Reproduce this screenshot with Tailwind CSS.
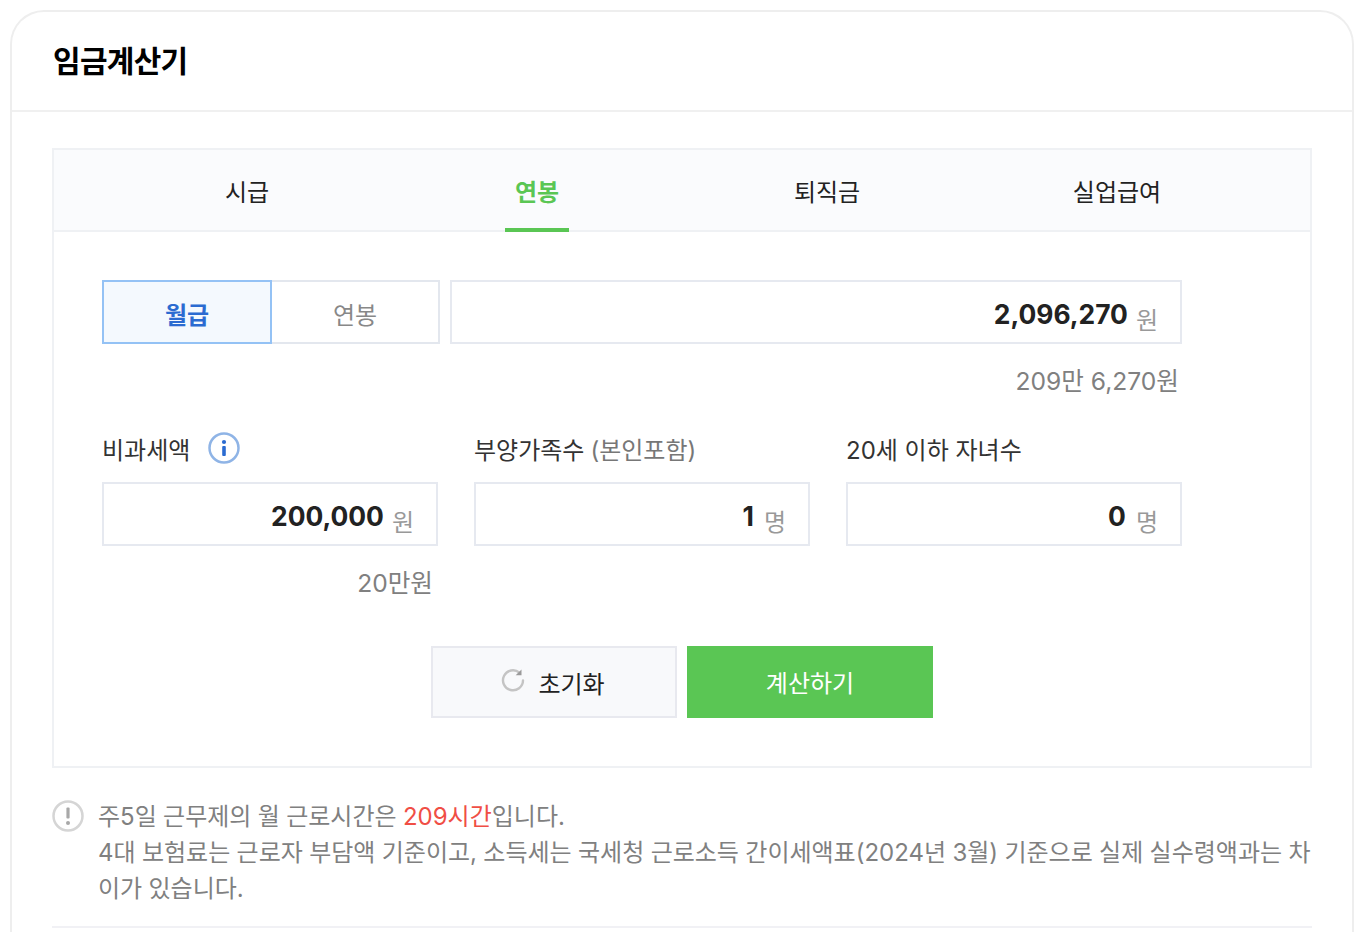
<!DOCTYPE html>
<html lang="ko">
<head>
  <meta charset="UTF-8">
  <title>임금계산기</title>
  <script src="https://cdn.jsdelivr.net/npm/@tailwindcss/browser@4"></script>
</head>
<body class="h-[932px] overflow-hidden bg-white font-['Inter','Noto_Sans_CJK_KR',sans-serif] text-[#222]">
<div class="mx-[10px] mt-[10px] rounded-t-[34px] border-2 border-b-0 border-[#eeeeee] h-[940px]">
  <div class="h-[100px] border-b-2 border-[#f0f0f0] pl-[41px] flex items-center">
    <h1 class="text-[30px] font-bold text-black tracking-[-0.7px]">임금계산기</h1>
  </div>

  <div class="px-[40px] pt-[36px]">
    <div class="border-2 border-[#eff1f4]">
      <div class="h-[82px] bg-[#fafbfd] border-b-2 border-[#eff1f4] px-[48px] grid grid-cols-4 text-[24px] text-center">
        <div class="flex items-center justify-center pt-[6px]">시급</div>
        <div class="flex items-center justify-center pt-[6px] relative font-bold text-[#5ac654]">연봉<span class="absolute bottom-[-2px] left-1/2 -translate-x-1/2 w-[64px] h-[4px] bg-[#5ac654]"></span></div>
        <div class="flex items-center justify-center pt-[6px]">퇴직금</div>
        <div class="flex items-center justify-center pt-[6px]">실업급여</div>
      </div>

      <div class="pt-[48px] pb-[48px]">
        <div class="ml-[48px] w-[1080px]">
          <div class="flex gap-[10px] h-[64px]">
            <div class="flex w-[338px] text-[24px]">
              <div class="w-[170px] border-2 border-[#94c2f5] bg-[#f4f9fe] text-[#2b6bd1] font-bold flex items-center justify-center pt-[8px]">월급</div>
              <div class="w-[168px] border-2 border-l-0 border-[#e3e7ee] text-[#888] flex items-center justify-center pt-[8px]">연봉</div>
            </div>
            <div class="flex-1 border-2 border-[#e6e9f0] flex items-center justify-end pr-[22px]">
              <span class="text-[26.4px] font-bold text-[#222] mr-[8px] mt-[6px]">2,096,270</span>
              <span class="text-[24px] text-[#999] mt-[18px]">원</span>
            </div>
          </div>
          <p class="text-right text-[24.6px] text-[#808080] pr-[3px] mt-[18px] leading-[38px]">209만 6,270원</p>

          <div class="grid grid-cols-3 gap-[36px] mt-[34px]">
            <div>
              <div class="h-[32px] flex items-center text-[24px] text-[#333] pt-[2px]">비과세액
                <svg class="ml-[18px] -mt-[6px]" width="32" height="32" viewBox="0 0 32 32"><circle cx="16" cy="16" r="14.5" fill="#fff" stroke="#8fb4e6" stroke-width="2.5"/><rect x="14.2" y="14" width="3.6" height="10" rx="1" fill="#2b6bd1"/><circle cx="16" cy="10" r="2.1" fill="#2b6bd1"/></svg>
              </div>
              <div class="mt-[16px] h-[64px] border-2 border-[#e6e9f0] flex items-center justify-end pr-[22px]">
                <span class="text-[26.4px] font-bold text-[#222] mr-[8px] mt-[6px]">200,000</span>
                <span class="text-[24px] text-[#999] mt-[18px]">원</span>
              </div>
              <p class="text-right text-[24.6px] text-[#808080] pr-[5px] mt-[18px] leading-[38px]">20만원</p>
            </div>
            <div>
              <div class="h-[32px] flex items-center text-[24px] text-[#333] pt-[2px]">부양가족수<span class="ml-[6px] text-[#777]">(본인포함)</span></div>
              <div class="mt-[16px] h-[64px] border-2 border-[#e6e9f0] flex items-center justify-end pr-[22px]">
                <span class="text-[26.4px] font-bold text-[#222] mr-[10px] mt-[6px]">1</span>
                <span class="text-[24px] text-[#999] mt-[18px]">명</span>
              </div>
            </div>
            <div>
              <div class="h-[32px] flex items-center text-[24px] text-[#333] pt-[2px]">20세 이하 자녀수</div>
              <div class="mt-[16px] h-[64px] border-2 border-[#e6e9f0] flex items-center justify-end pr-[22px]">
                <span class="text-[26.4px] font-bold text-[#222] mr-[10px] mt-[6px]">0</span>
                <span class="text-[24px] text-[#999] mt-[18px]">명</span>
              </div>
            </div>
          </div>
        </div>

        <div class="flex justify-center gap-[10px] mt-[44px] text-[24px]">
          <button class="w-[246px] h-[72px] border-2 border-[#e8e9ef] bg-[#f8f9fb] flex items-center justify-center gap-[13px] pr-[2px] text-[#222]">
            <svg class="-mt-[4px]" width="24" height="24" viewBox="0 0 24 24" fill="none"><path d="M18.4 4.6A10 10 0 1 0 22 12.5" stroke="#c4c4c4" stroke-width="2.4" stroke-linecap="round"/><path d="M20.5 1.5v5.8h-5.8z" fill="#9a9a9a"/></svg>
            <span class="pt-[6px]">초기화</span>
          </button>
          <button class="w-[246px] h-[72px] bg-[#5ac654] text-white flex items-center justify-center pt-[4px]">계산하기</button>
        </div>
      </div>
    </div>

    <div class="flex mt-[31px] text-[24px] leading-[36px] text-[#808080]">
      <svg class="shrink-0 mt-[1px]" width="32" height="32" viewBox="0 0 32 32"><circle cx="16" cy="16" r="14.5" fill="#fff" stroke="#d5d5d5" stroke-width="2.5"/><rect x="14.4" y="7.5" width="3.2" height="11" rx="1" fill="#a8a8a8"/><circle cx="16" cy="23" r="2" fill="#a8a8a8"/></svg>
      <p class="ml-[14px] break-all [word-spacing:-0.4px]">주5일 근무제의 월 근로시간은 <span class="text-[#f04e45]">209시간</span>입니다.<br>4대 보험료는 근로자 부담액 기준이고, 소득세는 국세청 근로소득 간이세액표(2024년 3월) 기준으로 실제 실수령액과는 차이가 있습니다.</p>
    </div>
    <div class="mt-[19px] border-t-2 border-[#f1f1f5]"></div>
  </div>
</div>
</body>
</html>
